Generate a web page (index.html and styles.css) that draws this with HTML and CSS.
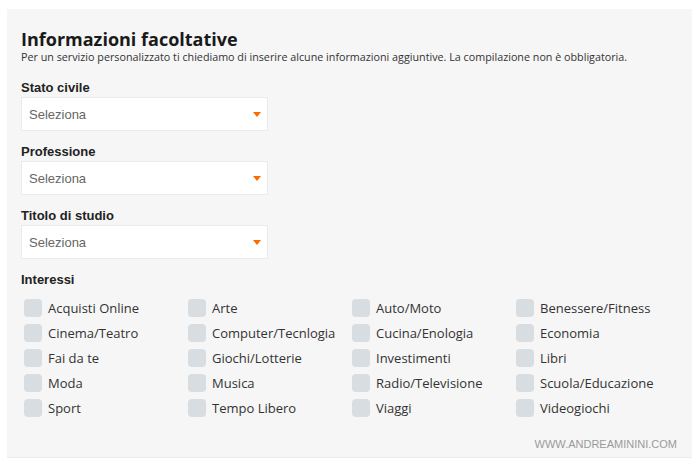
FILE: index.html
```html
<!DOCTYPE html>
<html lang="it">
<head>
<meta charset="utf-8">
<title>Informazioni facoltative</title>
<link rel="stylesheet" href="styles.css">
</head>
<body>
<div class="panel">
  <h1 class="title">Informazioni facoltative</h1>
  <p class="subtitle">Per un servizio personalizzato ti chiediamo di inserire alcune informazioni aggiuntive. La compilazione non è obbligatoria.</p>

  <div class="field">
    <div class="label">Stato civile</div>
    <div class="select"><span>Seleziona</span><i class="arrow"></i></div>
  </div>
  <div class="field">
    <div class="label">Professione</div>
    <div class="select"><span>Seleziona</span><i class="arrow"></i></div>
  </div>
  <div class="field">
    <div class="label">Titolo di studio</div>
    <div class="select"><span>Seleziona</span><i class="arrow"></i></div>
  </div>

  <div class="label">Interessi</div>
  <div class="checks">
    <label class="check"><span class="box"></span>Acquisti Online</label>
    <label class="check"><span class="box"></span>Arte</label>
    <label class="check"><span class="box"></span>Auto/Moto</label>
    <label class="check"><span class="box"></span>Benessere/Fitness</label>
    <label class="check"><span class="box"></span>Cinema/Teatro</label>
    <label class="check"><span class="box"></span>Computer/Tecnlogia</label>
    <label class="check"><span class="box"></span>Cucina/Enologia</label>
    <label class="check"><span class="box"></span>Economia</label>
    <label class="check"><span class="box"></span>Fai da te</label>
    <label class="check"><span class="box"></span>Giochi/Lotterie</label>
    <label class="check"><span class="box"></span>Investimenti</label>
    <label class="check"><span class="box"></span>Libri</label>
    <label class="check"><span class="box"></span>Moda</label>
    <label class="check"><span class="box"></span>Musica</label>
    <label class="check"><span class="box"></span>Radio/Televisione</label>
    <label class="check"><span class="box"></span>Scuola/Educazione</label>
    <label class="check"><span class="box"></span>Sport</label>
    <label class="check"><span class="box"></span>Tempo Libero</label>
    <label class="check"><span class="box"></span>Viaggi</label>
    <label class="check"><span class="box"></span>Videogiochi</label>
  </div>
  <div class="watermark">WWW.ANDREAMININI.COM</div>
</div>
</body>
</html>
```

FILE: styles.css
```css
html, body {
  margin: 0;
  padding: 0;
  background: #ffffff;
}

.panel {
  margin: 9px 0 0 7px;
  width: 685px;
  box-sizing: border-box;
  padding: 20px 15px 6px 14px;
  background: #f6f6f6;
  border-bottom: 1px solid #ececec;
}

.title {
  margin: 0;
  font-family: "Open Sans", sans-serif;
  font-weight: 700;
  font-size: 18px;
  line-height: 20px;
  color: #1a1a1a;
}

.subtitle {
  margin: 2px 0 17px 0;
  font-family: "Open Sans", sans-serif;
  font-size: 10.75px;
  line-height: 12px;
  color: #333333;
}

.field {
  margin-bottom: 13px;
}

.label {
  font-family: "Liberation Sans", Arial, sans-serif;
  font-weight: 700;
  font-size: 13px;
  line-height: 16px;
  color: #222222;
  margin-bottom: 1px;
}

.select {
  width: 247px;
  height: 34px;
  box-sizing: border-box;
  background: #ffffff;
  border: 1px solid #ebebeb;
  display: flex;
  align-items: center;
  justify-content: space-between;
  padding: 0 6px 0 7px;
  font-family: "Liberation Sans", Arial, sans-serif;
  font-size: 13px;
  color: #666666;
}

.arrow {
  width: 0;
  height: 0;
  border-left: 4px solid transparent;
  border-right: 4px solid transparent;
  border-top: 5px solid #ff6a00;
  margin-top: 1px;
}

.checks {
  margin-top: 11px;
  padding-left: 3px;
  display: grid;
  grid-template-columns: repeat(4, 164px);
  row-gap: 7px;
}

.check {
  display: flex;
  align-items: center;
  gap: 6px;
  height: 18px;
  font-family: "Open Sans", sans-serif;
  font-size: 13px;
  line-height: 18px;
  color: #333333;
}

.box {
  width: 18px;
  height: 18px;
  border-radius: 4px;
  background: #d8dde1;
  flex: none;
}

.watermark {
  margin-top: 21px;
  text-align: right;
  font-family: "Liberation Sans", Arial, sans-serif;
  font-size: 11px;
  line-height: 13px;
  color: #9a9a9a;
}
```
